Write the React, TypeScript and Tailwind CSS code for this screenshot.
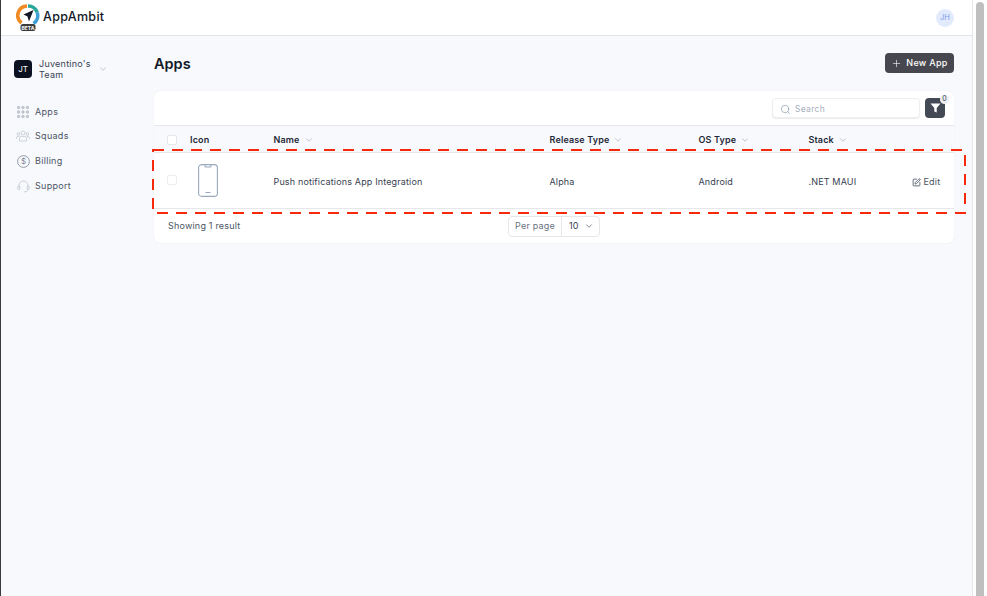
import React from "react";
import { ChevronDown, Plus, Search, SquarePen } from "lucide-react";

const font = "font-['Inter','Liberation_Sans',sans-serif]";

function Chevron({ className = "" }: { className?: string }) {
  return <ChevronDown className={className} size={10} strokeWidth={1.5} />;
}

function Logo() {
  return (
    <svg width="24" height="30" viewBox="0 0 24 30" className="shrink-0">
      <path d="M12 3 A9.5 9.5 0 0 1 21.2 9.5" fill="none" stroke="#2aa79b" strokeWidth="3.6" />
      <path d="M21.2 9.5 A9.5 9.5 0 0 1 17.5 20.5" fill="none" stroke="#3f9fd8" strokeWidth="3.6" />
      <path d="M11 3 A9.5 9.5 0 0 0 5.5 20" fill="none" stroke="#f08a24" strokeWidth="3.6" />
      <path d="M17.5 7 L7.5 11.5 L11.5 13.5 L13 18.5 Z" fill="#111827" />
      <rect x="4.5" y="21" width="15" height="7" rx="2.5" fill="#3a3a3a" />
      <text x="12" y="26.5" textAnchor="middle" fontSize="5" fontWeight="700" fill="#fff" fontFamily="Inter">BETA</text>
    </svg>
  );
}

function AppsIcon() {
  return (
    <svg width="12" height="12" viewBox="0 0 12 12" fill="#c4c9d2" stroke="#aeb4bf" strokeWidth="0.6">
      {[1.5, 6, 10.5].map((x) =>
        [1.5, 6, 10.5].map((y) => <circle key={`${x}-${y}`} cx={x} cy={y} r="1.3" />)
      )}
    </svg>
  );
}

function SquadsIcon() {
  return (
    <svg width="14" height="12" viewBox="0 0 14 12" fill="none" stroke="#c2c8d2" strokeWidth="0.8">
      <circle cx="7" cy="3" r="2" />
      <circle cx="2.6" cy="4" r="1.4" />
      <circle cx="11.4" cy="4" r="1.4" />
      <path d="M3.5 11 V8.5 A2 2 0 0 1 5.5 6.5 H8.5 A2 2 0 0 1 10.5 8.5 V11 Z" />
      <path d="M0.6 9 V7.6 A1.4 1.4 0 0 1 2 6.4 H3.4 M13.4 9 V7.6 A1.4 1.4 0 0 0 12 6.4 H10.6" />
    </svg>
  );
}

function BillingIcon() {
  return (
    <svg width="13" height="13" viewBox="0 0 13 13" fill="none" stroke="#7b8494" strokeWidth="0.8">
      <circle cx="6.5" cy="6.5" r="5.9" />
      <text x="6.5" y="9.3" textAnchor="middle" fontSize="8" fill="#7b8494" stroke="none" fontFamily="Inter">$</text>
    </svg>
  );
}

function SupportIcon() {
  return (
    <svg width="13" height="13" viewBox="0 0 13 13" fill="none" stroke="#c2c8d2" strokeWidth="0.9">
      <path d="M2 6.5 V5.5 A4.5 4.5 0 0 1 11 5.5 V6.5" />
      <rect x="0.8" y="6" width="2" height="3.6" rx="1" />
      <rect x="10.2" y="6" width="2" height="3.6" rx="1" />
      <path d="M11 9.6 A4 3 0 0 1 7 12" />
    </svg>
  );
}

function PhoneIcon() {
  return (
    <svg width="20" height="33" viewBox="0 0 20 33" fill="none" stroke="#9aa8bc" strokeWidth="1.1">
      <rect x="0.6" y="0.6" width="18.8" height="31.8" rx="3.2" />
      <path d="M7 0.8 V2.4 A0.6 0.6 0 0 0 7.6 3 H12.4 A0.6 0.6 0 0 0 13 2.4 V0.8" />
      <path d="M7.5 28.5 H12.5" />
    </svg>
  );
}

const nav = [
  { label: "Apps", icon: <AppsIcon />, h: "h-[17px]" },
  { label: "Squads", icon: <SquadsIcon />, h: "h-[18px]" },
  { label: "Billing", icon: <BillingIcon />, h: "h-[18px]" },
  { label: "Support", icon: <SupportIcon />, h: "h-[18px]" },
];

function Th({ label, className }: { label: string; className: string }) {
  return (
    <div className={`flex items-center gap-[4px] ${className}`}>
      <span className="text-[9px] font-semibold tracking-[0.15px] text-[#1f2937]">{label}</span>
      <Chevron className="text-[#9ca3af]" />
    </div>
  );
}

export default function App() {
  return (
    <div className={`${font} relative flex h-[596px] w-[987px] overflow-hidden bg-white`}>
      <div className="w-px shrink-0 bg-[#3a3a3a]" />
      <div className="flex w-[972px] shrink-0 flex-col border-r border-[#e5e7eb] bg-[#f8f9fd]">
        <header className="flex h-9 shrink-0 items-center justify-between border-b border-[#e2e4e8] bg-white pl-[15px] pr-[18px]">
          <div className="flex items-center gap-[3px]">
            <Logo />
            <span className="text-[12.5px] font-medium tracking-[0.3px] text-[#111827]">AppAmbit</span>
          </div>
          <div className="flex h-[18px] w-[18px] items-center justify-center rounded-full bg-[#e2ebfd] text-[7.5px] text-[#7c9bea]">
            JH
          </div>
        </header>
        <div className="flex min-h-0 flex-1">
          <aside className="w-[153px] shrink-0 pl-[13px] pt-[22px]">
            <div className="flex items-center">
              <div className="flex h-[18px] w-[18px] items-center justify-center rounded-[4px] bg-[#0b1120] text-[8px] text-white">
                JT
              </div>
              <div className="ml-[7px] w-[60px] text-[9px] leading-[11px] tracking-[0.25px] text-[#374151]">
                Juventino's Team
              </div>
              <Chevron className="ml-[-1px] text-[#9ca3af]" />
            </div>
            <nav className="mt-[23px] flex flex-col gap-[7px]">
              {nav.map((n) => (
                <div key={n.label} className={`flex items-center ${n.h}`}>
                  <span className="flex w-[17px] justify-center pl-px">{n.icon}</span>
                  <span className="ml-[4px] text-[9px] tracking-[0.3px] text-[#4b5563]">{n.label}</span>
                </div>
              ))}
            </nav>
          </aside>
          <main className="w-[800px] shrink-0 pt-[17px]">
            <div className="flex h-5 items-center justify-between">
              <h1 className="pt-[2px] text-[14.5px] font-semibold text-[#111827]">Apps</h1>
              <button className="flex h-5 w-[69px] items-center justify-center gap-[4px] rounded-[4px] bg-[#47484f] text-[9px] font-medium tracking-[0.3px] text-white">
                <Plus size={11} strokeWidth={1.3} />
                New App
              </button>
            </div>
            <section className="mt-[18px] rounded-[6px] bg-white shadow-[0_0_1px_rgba(0,0,0,0.12)]">
              <div className="flex h-[35px] items-center justify-end border-b border-[#e5e7eb] pr-[9px]">
                <div className="flex h-5 w-[148px] items-center rounded-[4px] border border-[#eceef1] bg-white pl-[7px] pt-[2px] shadow-[0_1px_1px_rgba(0,0,0,0.08)]">
                  <Search size={11} strokeWidth={1.3} className="text-[#7b8aa0]" />
                  <span className="ml-[4px] text-[8.5px] tracking-[0.3px] text-[#a7afbd]">Search</span>
                </div>
                <div className="relative ml-[5px] flex h-5 w-5 items-center justify-center rounded-[4px] bg-[#434a56]">
                  <svg width="11" height="10" viewBox="0 0 11 10" fill="white">
                    <path d="M0.5 0.5 H10.5 L6.7 5 V9.5 L4.3 8.4 V5 Z" />
                  </svg>
                  <span className="absolute -right-[4px] -top-[3px] flex h-[9px] w-[9px] items-center justify-center rounded-full bg-[#eceef1] text-[7px] text-[#374151]">
                    0
                  </span>
                </div>
              </div>
              <div className="flex h-[27px] items-center border-b border-[#e5e7eb] bg-[#f8f9fd] pt-px">
                <div className="ml-[13px] h-[10px] w-[10px] rounded-[2px] border border-[#e5e7eb] bg-white" />
                <span className="ml-[13px] w-[83.5px] text-[9px] font-semibold tracking-[0.15px] text-[#1f2937]">Icon</span>
                <Th label="Name" className="w-[276px]" />
                <Th label="Release Type" className="w-[149px]" />
                <Th label="OS Type" className="w-[110px]" />
                <Th label="Stack" className="" />
              </div>
              <div className="flex h-[56px] items-center border-b border-[#e5e7eb] pt-[3px]">
                <div className="ml-[13px] mt-[-5px] h-[10px] w-[10px] rounded-[2px] border border-[#eceef1] bg-white" />
                <div className="ml-[21px] mt-[-4px] flex w-[75.5px] shrink-0">
                  <PhoneIcon />
                </div>
                <span className="w-[276px] text-[9px] tracking-[0.15px] text-[#374151]">Push notifications App Integration</span>
                <span className="w-[149px] text-[9px] tracking-[0.15px] text-[#374151]">Alpha</span>
                <span className="w-[110px] text-[9px] tracking-[0.15px] text-[#374151]">Android</span>
                <span className="w-[103px] text-[9px] tracking-[0.15px] text-[#374151]">.NET MAUI</span>
                <span className="flex items-center gap-[3px] text-[9px] tracking-[0.2px] text-[#4b5563]">
                  <SquarePen size={9} strokeWidth={2} className="text-[#374151]" />
                  Edit
                </span>
              </div>
              <div className="flex h-[34px] items-center pl-[14px]">
                <span className="w-[340px] text-[9px] tracking-[0.2px] text-[#4b5563]">Showing 1 result</span>
                <div className="flex h-[21px] w-[92px] items-center rounded-[4px] border border-[#e5e7eb] text-[9px] tracking-[0.2px]">
                  <span className="flex h-full w-[53px] shrink-0 items-center justify-center border-r border-[#e5e7eb] text-[#6b7280]">Per page</span>
                  <span className="flex items-center gap-[5px] pl-[7px] text-[#374151]">
                    10
                    <ChevronDown size={10} strokeWidth={1.5} />
                  </span>
                </div>
              </div>
            </section>
          </main>
        </div>
      </div>
      <div className="relative w-[14px] shrink-0 bg-white">
        <div className="absolute left-[3px] top-[2px] h-[594px] w-[8px] rounded-t-full bg-[#bfbfbf]" />
      </div>
      {/* highlight overlay */}
      <svg className="absolute left-[152px] top-[149px]" width="815" height="65" fill="none">
        <rect x="1" y="1" width="812" height="63" stroke="#f6290c" strokeWidth="2" strokeDasharray="11 8" />
      </svg>
    </div>
  );
}
